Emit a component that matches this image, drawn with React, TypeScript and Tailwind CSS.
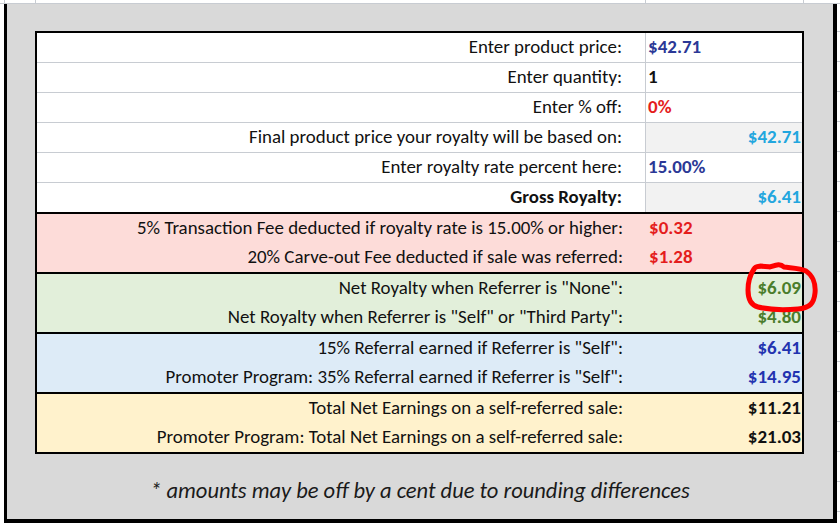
import React from "react";

type Row = {
  label: string;
  value: string;
  align: "left" | "right";
  color: string;
  boldLabel?: boolean;
  shaded?: boolean;
};

const top: Row[] = [
  { label: "Enter product price:", value: "$42.71", align: "left", color: "text-[#2b3896]" },
  { label: "Enter quantity:", value: "1", align: "left", color: "text-[#111111]" },
  { label: "Enter % off:", value: "0%", align: "left", color: "text-[#e41d1d]" },
  { label: "Final product price your royalty will be based on:", value: "$42.71", align: "right", color: "text-[#22a6de]", shaded: true },
  { label: "Enter royalty rate percent here:", value: "15.00%", align: "left", color: "text-[#2b3896]" },
  { label: "Gross Royalty:", value: "$6.41", align: "right", color: "text-[#22a6de]", boldLabel: true, shaded: true },
];

const sections: { bg: string; rows: Row[] }[] = [
  {
    bg: "bg-[#fddcd9]",
    rows: [
      { label: "5% Transaction Fee deducted if royalty rate is 15.00% or higher:", value: "$0.32", align: "left", color: "text-[#e41d1d]" },
      { label: "20% Carve-out Fee deducted if sale was referred:", value: "$1.28", align: "left", color: "text-[#e41d1d]" },
    ],
  },
  {
    bg: "bg-[#e2efda]",
    rows: [
      { label: 'Net Royalty when Referrer is "None":', value: "$6.09", align: "right", color: "text-[#4a7d2b]" },
      { label: 'Net Royalty when Referrer is "Self" or "Third Party":', value: "$4.80", align: "right", color: "text-[#4a7d2b]" },
    ],
  },
  {
    bg: "bg-[#ddebf7]",
    rows: [
      { label: '15% Referral earned if Referrer is "Self":', value: "$6.41", align: "right", color: "text-[#2233b0]" },
      { label: 'Promoter Program: 35% Referral earned if Referrer is "Self":', value: "$14.95", align: "right", color: "text-[#2233b0]" },
    ],
  },
  {
    bg: "bg-[#fff2cc]",
    rows: [
      { label: "Total Net Earnings on a self-referred sale:", value: "$11.21", align: "right", color: "text-[#111111]" },
      { label: "Promoter Program: Total Net Earnings on a self-referred sale:", value: "$21.03", align: "right", color: "text-[#111111]" },
    ],
  },
];

const font = { fontFamily: "Carlito, Lato, 'Liberation Sans', sans-serif" };

export default function App() {
  return (
    <div className="relative w-[840px] h-[523px] overflow-hidden bg-white text-[#111111]" style={font}>
      {/* top sheet strip */}
      <div className="flex h-[4px] border-b border-[#c8ccd2]">
        <div className="w-[5px] border-r border-[#c8ccd2]" />
        <div className="w-[31px] border-r border-[#c8ccd2]" />
        <div className="w-[610px] border-r border-[#c8ccd2]" />
        <div className="w-[158px] border-r border-[#c8ccd2]" />
      </div>
      <div className="flex h-[519px]">
        <div className="w-[4px]" />
        {/* outer gray box */}
        <div className="flex w-[833px] flex-col bg-[#d9d9d9] border-l-[3px] border-r-[4px] border-b-[4px] border-black">
          <div className="ml-[28px] mt-[27px] w-[769px] border-2 border-black bg-white">
            {top.map((r, i) => (
              <div
                key={i}
                className={`flex ${i === 5 ? "h-[29px]" : "h-[30px] border-b border-[#c8ccd2]"}`}
              >
                <div
                  className={`flex w-[609px] items-center justify-end whitespace-nowrap border-r border-[#c8ccd2] pr-[23px] text-[18.9px] ${
                    r.boldLabel ? "font-bold" : ""
                  }`}
                >
                  {r.label}
                </div>
                <div
                  className={`flex flex-1 items-center text-[19px] font-bold ${r.color} ${
                    r.align === "right" ? "justify-end pr-[1px]" : "justify-start pl-[2px]"
                  } ${r.shaded ? "bg-[#f2f2f2]" : ""}`}
                >
                  {r.value}
                </div>
              </div>
            ))}
            {sections.map((s, si) => (
              <div key={si} className={`border-t-2 border-black ${s.bg}`}>
                {s.rows.map((r, i) => (
                  <div key={i} className="flex h-[29px]">
                    <div className="flex w-[609px] items-center justify-end whitespace-nowrap pr-[23px] text-[18.9px]">
                      {r.label}
                    </div>
                    <div
                      className={`ml-[1px] flex flex-1 items-center text-[19px] font-bold ${r.color} ${
                        r.align === "right" ? "justify-end pr-[1px]" : "justify-start pl-[2px]"
                      }`}
                    >
                      {r.value}
                    </div>
                  </div>
                ))}
              </div>
            ))}
          </div>
          <div className="flex flex-1 items-center justify-center pt-[8px] text-[22.5px] italic text-[#1a1a1a]">
            * amounts may be off by a cent due to rounding differences
          </div>
        </div>
        {/* right sheet strip */}
        <div className="flex w-[3px] flex-col">
          <div className="h-[28px] border-b border-[#c8ccd2]" />
          {[0, 1, 2, 3, 4, 5, 6, 7, 8, 9, 10, 11, 12, 13, 14, 15].map((k) => (
            <div key={k} className="h-[30px] border-b border-[#c8ccd2]" />
          ))}
        </div>
      </div>
      {/* hand-drawn red circle */}
      <svg
        className="absolute left-[740px] top-[258px]"
        width="86"
        height="60"
        viewBox="0 0 86 60"
        fill="none"
      >
        <path
          d="M14 11 C16 7, 22 8, 30 9 C36 7, 40 5, 44 9 C50 10, 60 10, 66 13 C72 17, 76 25, 75 35 C74 45, 70 50, 58 51 C46 52, 30 52, 18 49 C10 47, 8 40, 8 32 C8 24, 10 17, 14 11 Z"
          stroke="#ff0000"
          strokeWidth="5"
          strokeLinecap="round"
          strokeLinejoin="round"
        />
      </svg>
    </div>
  );
}
